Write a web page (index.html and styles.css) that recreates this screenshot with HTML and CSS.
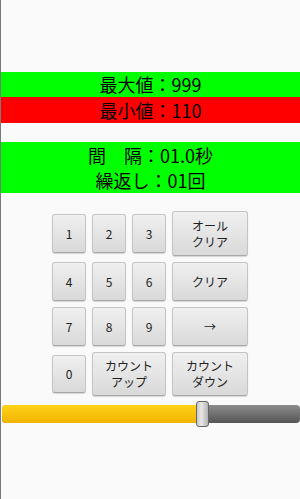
FILE: index.html
```html
<!DOCTYPE html>
<html lang="ja">
<head>
	<meta charset="UTF-8">
	<title>カウンター</title>
	<link rel="stylesheet" href="styles.css">
</head>
<body>
	<div class="screen">
		<div class="band green short">最大値：999</div>
		<div class="band red short">最小値：110</div>

		<div class="band green tall">
			<div>間　隔：01.0秒</div>
			<div>繰返し：01回</div>
		</div>

		<div class="keypad">
			<button class="key">1</button>
			<button class="key">2</button>
			<button class="key">3</button>
			<button class="key wide">オール<br>クリア</button>

			<button class="key">4</button>
			<button class="key">5</button>
			<button class="key">6</button>
			<button class="key wide">クリア</button>

			<button class="key">7</button>
			<button class="key">8</button>
			<button class="key">9</button>
			<button class="key wide">→</button>

			<button class="key">0</button>
			<button class="key mid">カウント<br>アップ</button>
			<button class="key wide">カウント<br>ダウン</button>
		</div>

		<div class="seekbar">
			<div class="track">
				<div class="fill" style="width: 66%"></div>
			</div>
			<div class="thumb" style="left: 65.5%"></div>
		</div>
	</div>
</body>
</html>
```

FILE: styles.css
```css
html, body {
	margin: 0;
	padding: 0;
}
body {
	background-color: #fafafa;
	font-family: "Noto Sans CJK JP", "Noto Sans", sans-serif;
	color: #000;
}

.screen {
	height: 499px;
	border-left: 1px solid #7a7a7a;
	padding-top: 72px;
	box-sizing: border-box;
}

/*表示の帯*/
.band {
	text-align: center;
	font-size: 18px;
}
.band.short {
	height: 25px;
	line-height: 25px;
}
.band.red {
	height: 26px;
	line-height: 26px;
}
.band.tall {
	margin-top: 19px;
	height: 51px;
	line-height: 25px;
	padding-top: 1px;
	box-sizing: border-box;
}
.green {
	background-color: #00ff00;
}
.red {
	background-color: #ff0000;
}

/*ボタン*/
.keypad {
	display: grid;
	grid-template-columns: 34px 34px 34px 76px;
	grid-template-rows: 45px 39px 39px 44px;
	column-gap: 6px;
	row-gap: 6px;
	justify-content: center;
	align-items: center;
	margin-top: 18px;
	margin-left: -1px;
}
.key {
	height: 39px;
	padding: 0;
	border: 1px solid #c4c4c4;
	border-bottom-color: #a8a8a8;
	border-radius: 3px;
	background: linear-gradient(#f0f0f0, #d9d9d9);
	box-shadow: 0 1px 1px rgba(0,0,0,0.15);
	font-family: "Noto Sans CJK JP", "Noto Sans", sans-serif;
	font-size: 12px;
	line-height: 16px;
	color: #222;
}
.key.wide {
	height: 100%;
}
.key.mid {
	grid-column: span 2;
	height: 100%;
}
.keypad .key:nth-child(13) {
	height: 38px;
}

/*シークバー*/
.seekbar {
	position: relative;
	height: 27px;
	margin-top: 5px;
	padding-top: 4px;
	box-sizing: border-box;
}
.track {
	height: 18px;
	margin: 0 0 0 1px;
	border-radius: 4px;
	overflow: hidden;
	background: linear-gradient(#8c8c8c, #555);
}
.fill {
	height: 100%;
	background: linear-gradient(#ffd21a, #f2b400);
}
.thumb {
	position: absolute;
	top: 0;
	width: 13px;
	height: 26px;
	margin-left: -1px;
	border: 1px solid #666;
	border-radius: 3px;
	box-sizing: border-box;
	background: linear-gradient(to right, #c8c8c8, #e8e8e8 40%, #b4b4b4);
}
```
